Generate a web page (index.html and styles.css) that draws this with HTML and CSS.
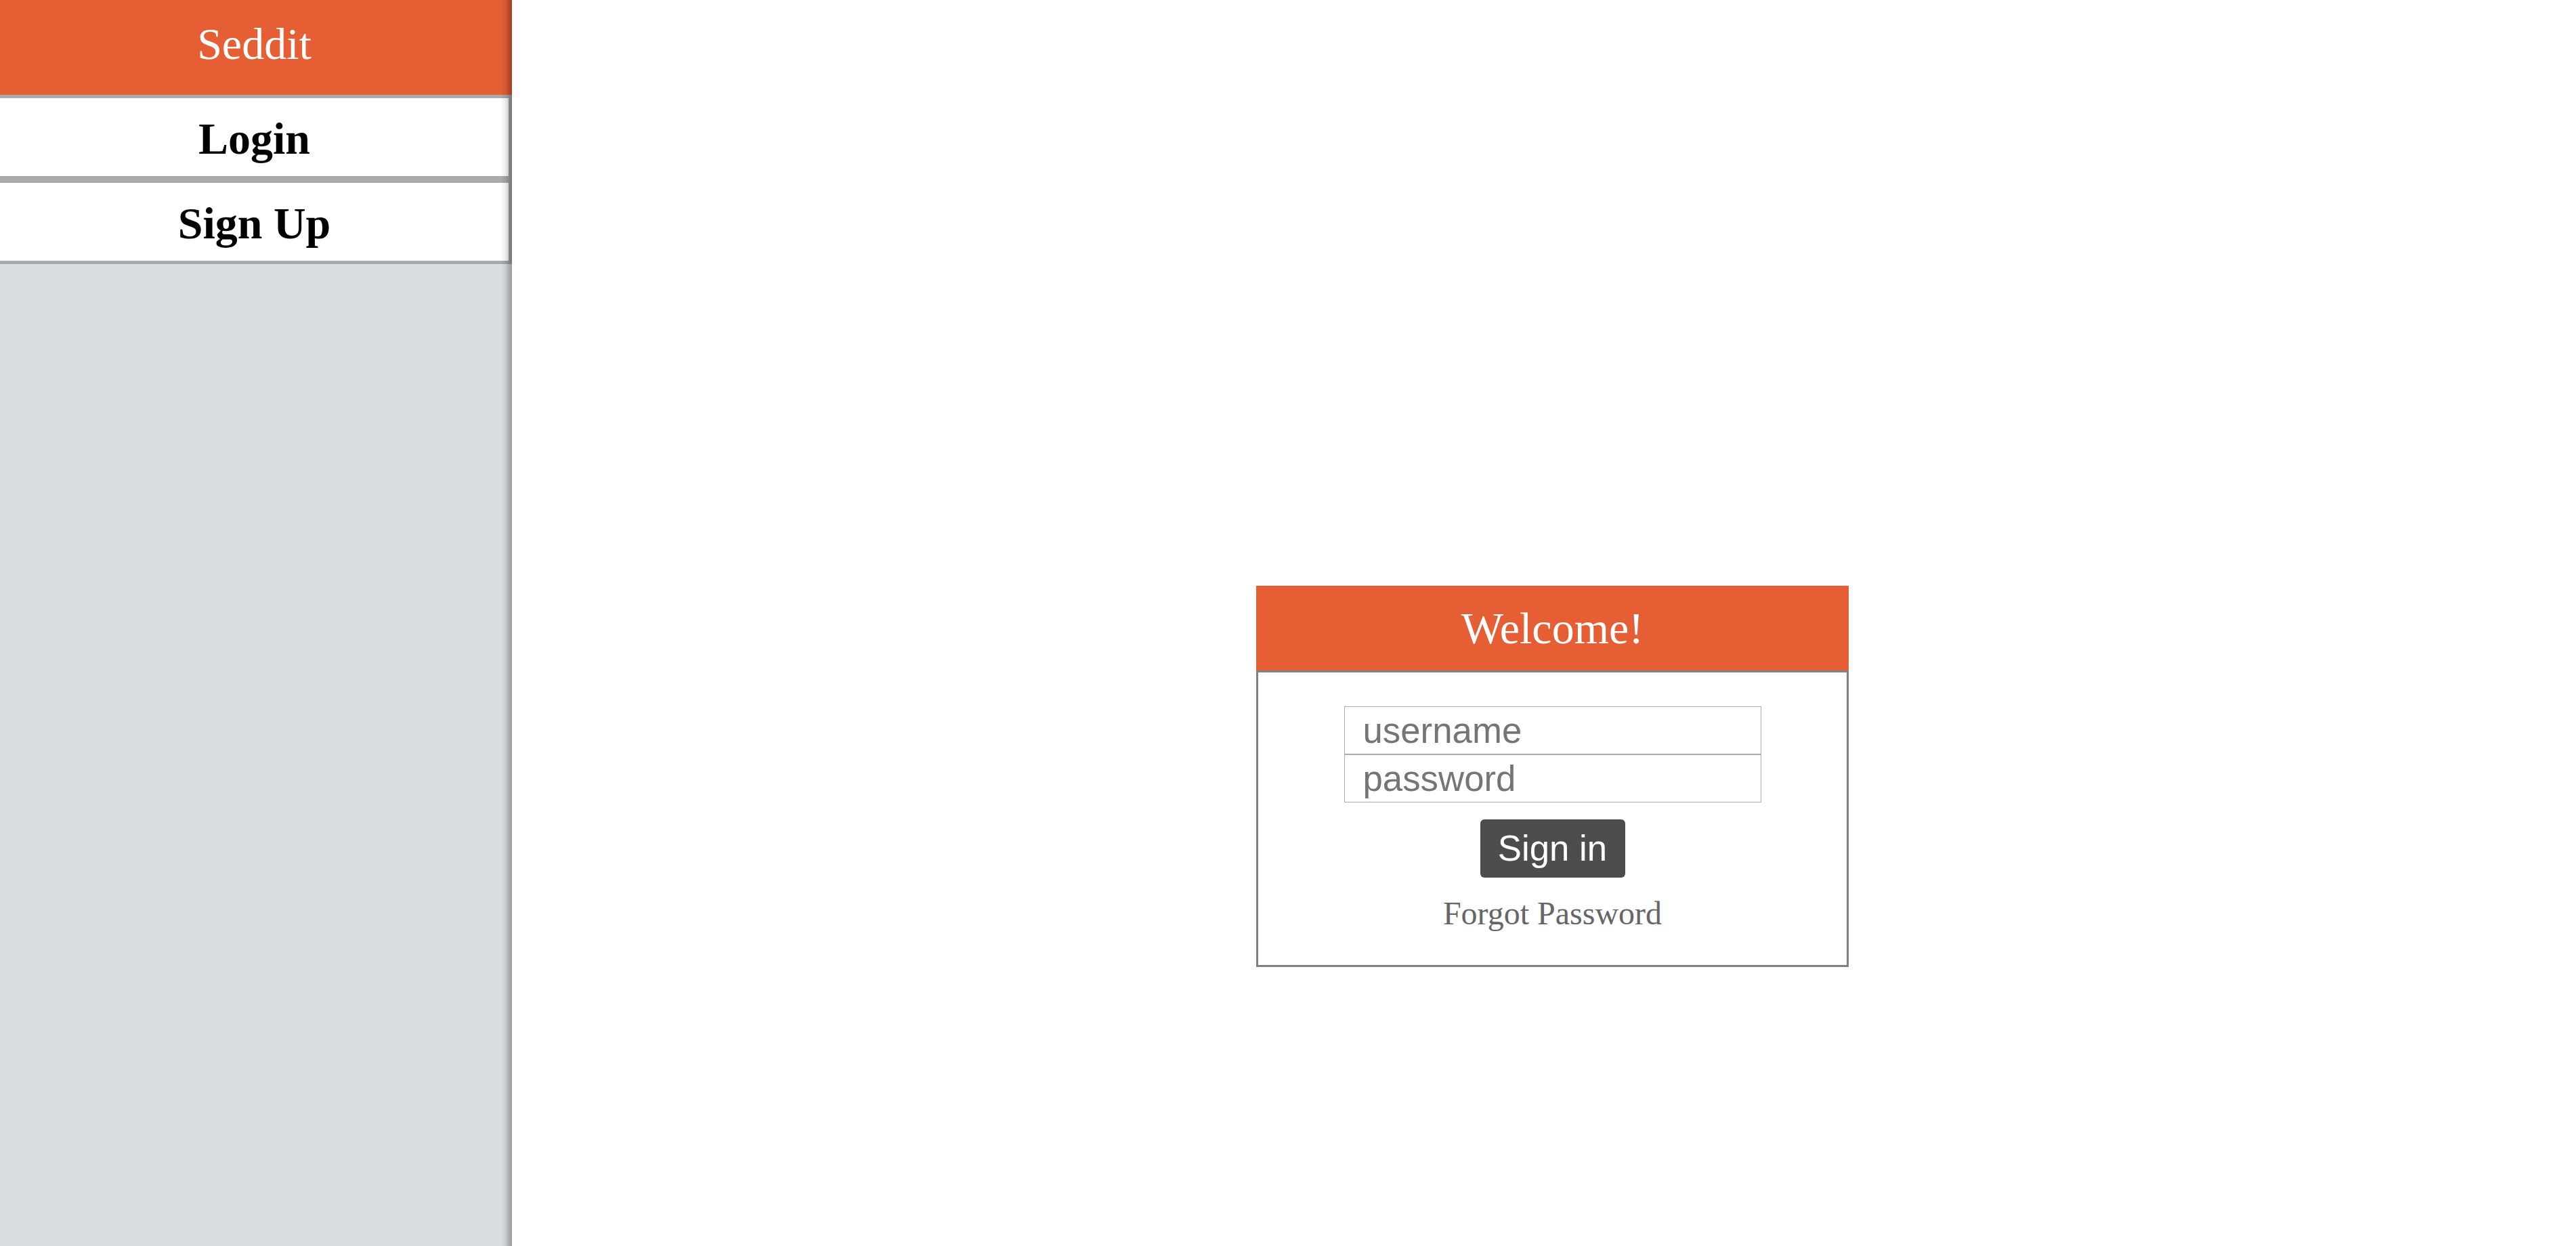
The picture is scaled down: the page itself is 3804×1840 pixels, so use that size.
FILE: index.html
```html
<!DOCTYPE html>
<html lang="en">
<head>
<meta charset="utf-8">
<title>Seddit</title>
<link rel="stylesheet" href="styles.css">
</head>
<body>
<div class="app">
  <aside class="sidebar">
    <div class="brand">Seddit</div>
    <nav class="nav">
      <a class="nav-item" href="#">Login</a>
      <a class="nav-item" href="#">Sign Up</a>
    </nav>
    <div class="sidebar-shade"></div>
  </aside>
  <main class="main">
    <section class="card">
      <div class="card-head">Welcome!</div>
      <form class="card-body">
        <div class="fields">
          <input class="field" type="text" placeholder="username">
          <input class="field" type="password" placeholder="password">
        </div>
        <button class="btn" type="button">Sign in</button>
        <a class="forgot" href="#">Forgot Password</a>
      </form>
    </section>
  </main>
</div>
</body>
</html>
```
FILE: styles.css
```css
html, body {
  margin: 0;
  padding: 0;
  height: 100%;
  background: #ffffff;
}

body {
  font-family: "Liberation Serif", "Times New Roman", serif;
}

.app {
  display: flex;
  min-height: 1840px;
}

.sidebar {
  position: relative;
  width: 756px;
  flex: 0 0 756px;
  background: #d9dee2;
  display: flex;
  flex-direction: column;
}

.brand {
  box-sizing: border-box;
  height: 140px;
  padding: 28px 5px 0 0;
  background: #e65e34;
  color: #ffffff;
  font-size: 66px;
  line-height: 73px;
  text-align: center;
}

.nav {
  display: flex;
  flex-direction: column;
}

.nav-item {
  display: block;
  background: #ffffff;
  border: 5px solid #aaaaaa;
  border-left: none;
  padding: 23px 0 19px;
  color: #000000;
  font-weight: bold;
  font-size: 66px;
  line-height: 73px;
  text-align: center;
  text-decoration: none;
}

.sidebar-shade {
  position: absolute;
  top: 0;
  right: 0;
  bottom: 0;
  width: 17px;
  background: linear-gradient(to right, rgba(0,0,0,0) 0%, rgba(0,0,0,0.08) 45%, rgba(0,0,0,0.24) 80%, rgba(0,0,0,0.3) 100%);
  pointer-events: none;
}

.main {
  flex: 1;
  display: flex;
  justify-content: center;
  align-items: flex-start;
  padding: 865px 0 0 25px;
}

.card {
  width: 875px;
}

.card-head {
  height: 125px;
  background: #e65e34;
  color: #ffffff;
  font-size: 66px;
  line-height: 73px;
  display: flex;
  align-items: center;
  justify-content: center;
}

.card-body {
  margin: 0;
  border: 3px solid #808080;
  padding: 50px 0 49px;
  display: flex;
  flex-direction: column;
  align-items: center;
}

.fields {
  display: flex;
  flex-direction: column;
  width: 616px;
}

.field {
  box-sizing: border-box;
  display: block;
  width: 616px;
  height: 71px;
  margin: 0;
  border: 1px solid #aaaaaa;
  border-radius: 0;
  padding: 0 27px;
  font-family: "Liberation Sans", Arial, sans-serif;
  font-size: 52.8px;
  color: #333333;
  background: #ffffff;
  outline: none;
}

.field::placeholder {
  color: #757575;
}

.btn {
  box-sizing: border-box;
  margin-top: 25px;
  width: 214px;
  height: 86px;
  border: none;
  border-radius: 6px;
  background: #4d4d4d;
  color: #ffffff;
  font-family: "Liberation Sans", Arial, sans-serif;
  font-size: 52.8px;
  line-height: 60px;
  padding: 0;
  cursor: pointer;
}

.forgot {
  margin-top: 25px;
  color: #666666;
  font-size: 48px;
  line-height: 55px;
  text-decoration: none;
}
```
